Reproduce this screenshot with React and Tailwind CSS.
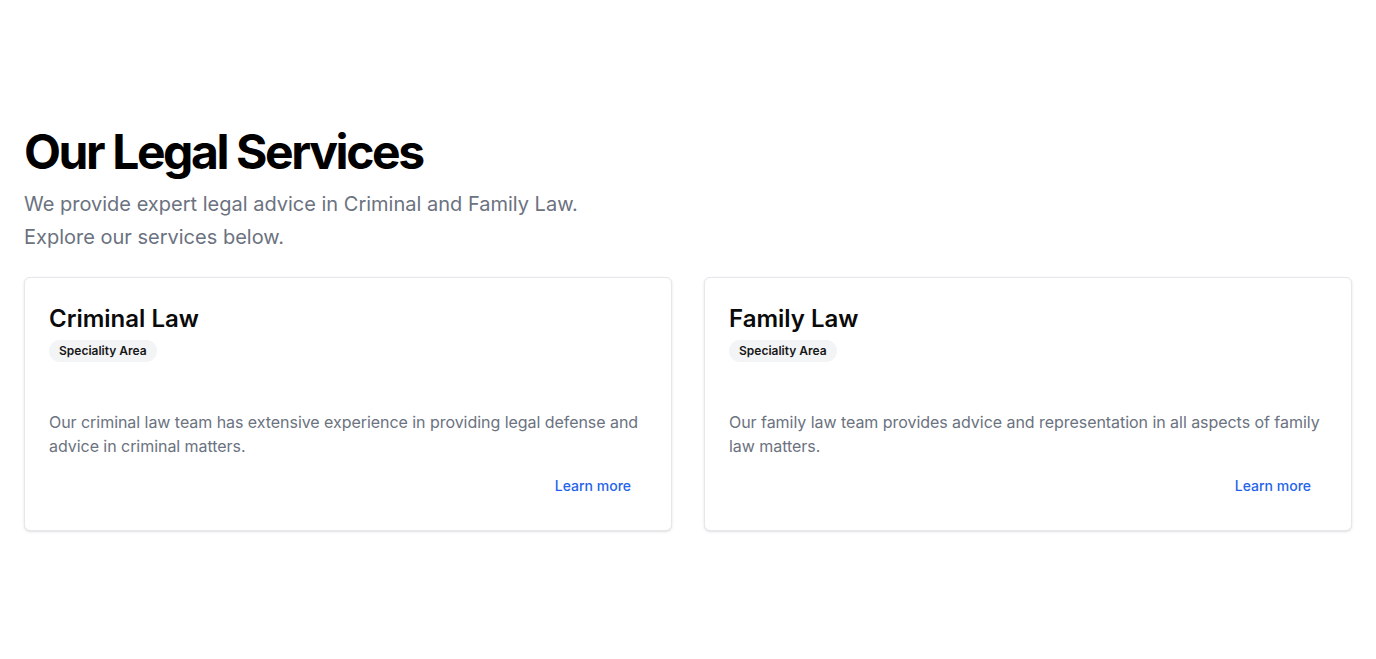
import React from 'react';

const services = [
  {
    title: 'Criminal Law',
    text: 'Our criminal law team has extensive experience in providing legal defense and advice in criminal matters.',
  },
  {
    title: 'Family Law',
    text: 'Our family law team provides advice and representation in all aspects of family law matters.',
  },
];

function ServiceCard({ title, text }) {
  return (
    <div className="flex flex-col rounded-md border border-gray-200 bg-white shadow-sm">
      <div className="flex flex-col items-start px-6 pt-[25px]">
        <h3 className="text-2xl font-semibold leading-8 text-[#0a0a0a]">{title}</h3>
        <span className="mt-[5px] rounded-full bg-gray-100 px-2.5 py-[3px] text-xs font-semibold leading-4 text-[#171717]">
          Speciality Area
        </span>
      </div>
      <div className="px-6 pt-12">
        <p className="text-base leading-6 tracking-[-0.003em] text-[#6b7280]">{text}</p>
      </div>
      <div className="flex justify-end px-6 pt-2 pb-6">
        <button className="h-10 px-4 text-sm font-medium text-[#2563eb]">Learn more</button>
      </div>
    </div>
  );
}

export default function App() {
  return (
    <div className="min-h-screen bg-white px-6 pt-[124px] font-['Inter',sans-serif]">
      <h1 className="text-5xl font-bold leading-[56px] tracking-[-0.05em] text-black">Our Legal Services</h1>
      <p className="mt-2 max-w-[600px] text-xl leading-[33px] text-[#6b7280]">
        We provide expert legal advice in Criminal and Family Law. Explore our services below.
      </p>
      <div className="mt-[23px] grid grid-cols-2 gap-8">
        {services.map((s) => (
          <ServiceCard key={s.title} {...s} />
        ))}
      </div>
    </div>
  );
}
